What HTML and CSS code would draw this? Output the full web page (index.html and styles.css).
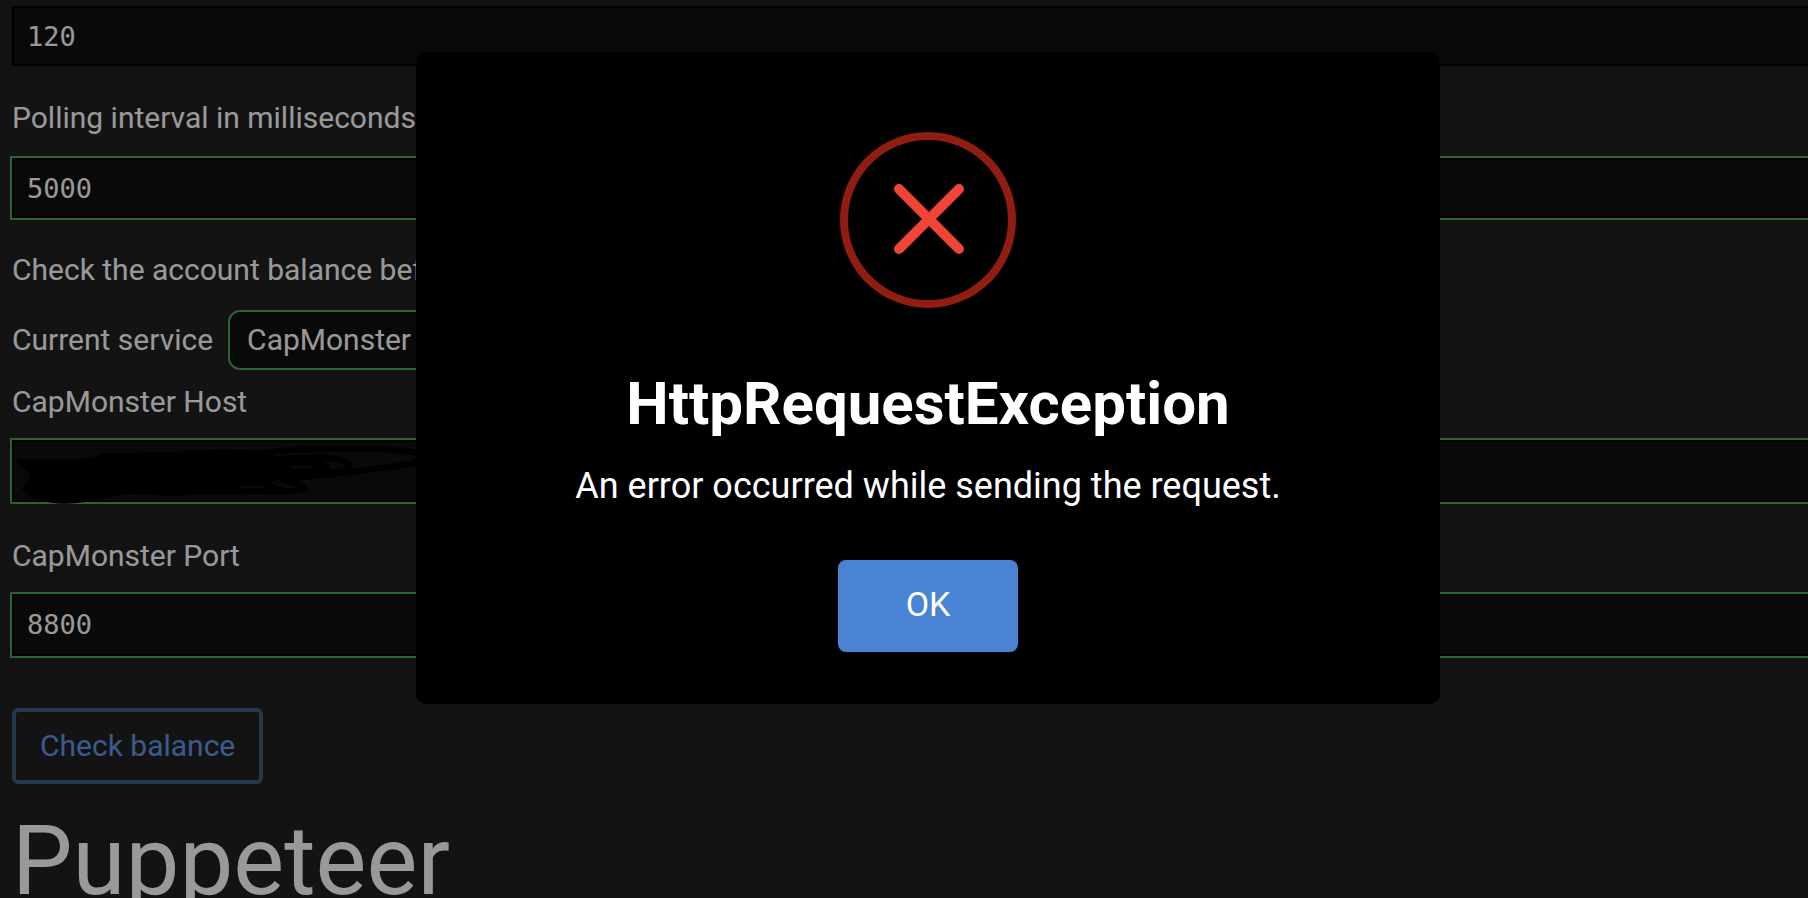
FILE: index.html
```html
<!DOCTYPE html>
<html lang="en">
<head>
    <meta charset="UTF-8">
    <meta name="viewport" content="width=device-width, initial-scale=1.0">
    <title>Settings</title>
    <link rel="stylesheet" href="styles.css">
</head>

<body>
    <form class="settings">
        <div class="form-group">
            <input type="text" class="field" aria-label="Timeout in seconds" value="120">
        </div>

        <div class="form-group">
            <label for="polling">Polling interval in milliseconds</label>
            <input type="text" id="polling" class="field valid" value="5000">
        </div>

        <div class="check-text">Check the account balance before solving</div>

        <div class="service-row">
            <label for="service">Current service</label>
            <select id="service" class="valid">
                <option>CapMonster</option>
            </select>
        </div>

        <div class="form-group large">
            <label for="host">CapMonster Host</label>
            <div class="field-wrap">
                <input type="text" id="host" class="field valid">
                <svg class="scribble" width="420" height="64" viewBox="0 0 420 64" aria-hidden="true">
                    <path class="blob" d="M3 19 L60 19 Q80 20 86 15 Q92 12 106 13 L160 12 Q210 8 255 11 L262 16 L270 22 L282 28 L284 36 L262 41 L250 45 L228 46 L216 52 L166 56 L120 54 Q100 55 84 60 Q46 68 26 59 Q14 56 10 49 L16 40 L18 35 Z"/>
                    <path d="M250 13 Q290 8 340 9 Q400 9 410 15 Q412 24 370 28 L330 33 L280 38"/>
                    <path d="M255 19 L300 18 Q325 17 335 22 Q342 28 325 32 L270 35"/>
                    <path d="M270 23 L300 23 Q318 24 314 29 L280 32"/>
                    <path d="M270 39 Q290 44 292 49 Q285 52 250 51 L170 52"/>
                    <path d="M252 44 L268 50"/>
                </svg>
            </div>
        </div>

        <div class="form-group large">
            <label for="port">CapMonster Port</label>
            <input type="text" id="port" class="field valid" value="8800">
        </div>

        <button type="button" class="btn-outline">Check balance</button>

        <h1>Puppeteer</h1>
    </form>

    <div class="overlay">
        <div class="modal" role="dialog" aria-labelledby="modal-title">
            <svg class="error-icon" width="176" height="176" viewBox="0 0 176 176" aria-hidden="true">
                <circle cx="88" cy="88" r="84"/>
                <path d="M59 57 L119 117 M119 57 L59 117"/>
            </svg>
            <h2 id="modal-title">HttpRequestException</h2>
            <p>An error occurred while sending the request.</p>
            <button type="button" class="btn-ok">OK</button>
        </div>
    </div>
</body>
</html>
```
FILE: styles.css
```css
* {
    box-sizing: border-box;
}

body {
    margin: 0;
    height: 100vh;
    overflow: hidden;
    background-color: #212121;
    color: #fff;
    font-family: Roboto, sans-serif;
    font-size: 30px;
    line-height: 36px;
}

/* Settings form, runs past the right edge */
.settings {
    width: calc(100% + 48px);
    padding: 6px 12px;
}

.form-group {
    margin-bottom: 34px;
}

.form-group label {
    display: block;
    margin-bottom: 22px;
}

.field {
    display: block;
    width: 100%;
    height: 60px;
    padding: 0 13px;
    border: 2px solid #000;
    border-radius: 0;
    background-color: #0f0f0f;
    color: #fff;
    font-family: "DejaVu Sans Mono", monospace;
    font-size: 27px;
}

.field.valid {
    outline: 2px solid #4ca456;
}

.form-group.large {
    margin-bottom: 36px;
}

.form-group.large label {
    margin-bottom: 20px;
}

.large .field {
    height: 62px;
    padding-bottom: 2px;
}

.check-text {
    margin-bottom: 22px;
}

.service-row {
    display: flex;
    align-items: center;
    gap: 15px;
    margin-bottom: 14px;
}

.service-row select {
    appearance: none;
    width: 280px;
    height: 60px;
    padding: 0 17px 2px;
    border: 2px solid #4ca456;
    border-radius: 12px;
    background-color: #0f0f0f;
    color: #fff;
    font-family: inherit;
    font-size: 30px;
}

/* Hidden host value */
.field-wrap {
    position: relative;
}

.scribble {
    position: absolute;
    top: 0;
    left: 0;
    fill: none;
    stroke: #000;
    stroke-width: 6;
    stroke-linecap: round;
}

.scribble .blob {
    fill: #000;
    stroke: none;
}

.btn-outline {
    display: block;
    height: 76px;
    margin-top: 52px;
    padding: 0 24px 2px;
    border: 4px solid #3f6080;
    border-radius: 6px;
    background: none;
    color: #6498e8;
    font-family: inherit;
    font-size: 30px;
}

h1 {
    margin: 21px 0 0;
    font-size: 96px;
    font-weight: 400;
    line-height: 112px;
}

/* Error dialog */
.overlay {
    position: fixed;
    inset: 0 -48px 0 0;
    display: flex;
    justify-content: center;
    align-items: flex-start;
    padding-top: 52px;
    background-color: rgba(0, 0, 0, 0.4);
}

.modal {
    display: flex;
    flex-direction: column;
    align-items: center;
    width: 1024px;
    padding: 80px 40px 52px;
    border-radius: 10px;
    background-color: #000;
}

.error-icon {
    fill: none;
    stroke: #911c12;
    stroke-width: 8;
}

.error-icon path {
    stroke: #f04438;
    stroke-width: 10;
    stroke-linecap: round;
}

.modal h2 {
    margin: 60px 0 0;
    font-size: 60px;
    font-weight: 700;
    line-height: 72px;
}

.modal p {
    margin: 24px 0 0;
    font-size: 36px;
    line-height: 44px;
}

.btn-ok {
    width: 180px;
    height: 92px;
    margin-top: 52px;
    padding: 0 0 4px;
    border: none;
    border-radius: 8px;
    background-color: #4a82d4;
    color: #fff;
    font-family: inherit;
    font-size: 34px;
}
```
